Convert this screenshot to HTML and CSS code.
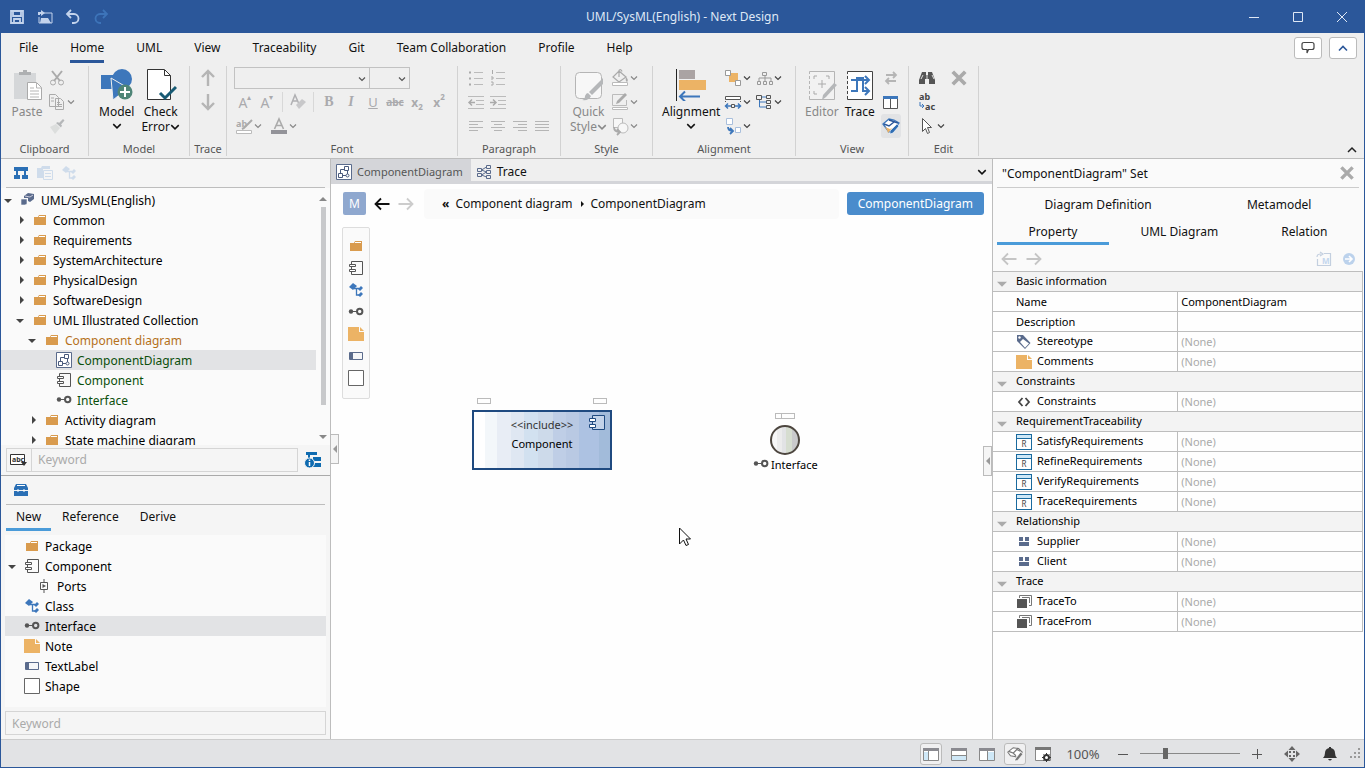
FILE: index.html
```html
<!DOCTYPE html>
<html lang="en">
<head>
    <meta charset="UTF-8">
    <meta name="viewport" content="width=device-width, initial-scale=1.0">
    <title>UML/SysML(English) - Next Design</title>
    <link rel="stylesheet" href="styles.css">
</head>
<body>
    <!-- shared icons -->
    <svg class="defs" width="0" height="0">
        <symbol id="caret" viewBox="0 0 8 8"><path d="M1 2.500l3 3 3-3" fill="none" stroke="currentColor" stroke-width="1.200"/></symbol>
        <symbol id="open" viewBox="0 0 8 8"><path d="M0 3h8L4 7z" fill="currentColor"/></symbol>
        <symbol id="closed" viewBox="0 0 8 8"><path d="M4 0l4 4-4 4z" fill="currentColor"/></symbol>
        <symbol id="folder" viewBox="0 0 16 16"><path d="M2 5h4l1-2h7v10H2z" fill="#d99b4e"/><path d="M7 4.500h6" stroke="#fff"/></symbol>
        <symbol id="note" viewBox="0 0 16 16"><path d="M0 1h11v5h5v9H0z" fill="#ecb365"/><path d="M12 1l4 4h-4z" fill="#ecb365"/></symbol>
        <symbol id="component" viewBox="0 0 16 16"><path d="M3.500 4V1.500h11v13h-11V12M3.500 7v2" fill="none" stroke="#555"/><path d="M1.500 4.500h6v2h-6zM1.500 9.500h6v2h-6z" fill="#fff" stroke="#555"/></symbol>
        <symbol id="diagram" viewBox="0 0 16 16"><path d="M.5.5h15v15H.5z" fill="#fff" stroke="#5a6b8c"/><path d="M8.500 2.500h4v4h-4zM2.500 9.500h4v4h-4zM4.500 9.500v-4h4M11.500 7v3M6.500 11.500H10" fill="none" stroke="#4a5a7c"/><circle cx="11.500" cy="11.500" r="1.500" fill="none" stroke="#4a5a7c"/></symbol>
        <symbol id="iface" viewBox="0 0 16 16"><circle cx="3" cy="7.500" r="2.200" fill="#555"/><path d="M5 7.500h4" stroke="#555"/><circle cx="11.700" cy="7.500" r="2.700" fill="none" stroke="#555" stroke-width="2"/></symbol>
        <symbol id="class" viewBox="0 0 16 16"><path d="M1 5l4-4 4 3-4 4z" fill="currentColor"/><path d="M6 6.500h5M8.500 7v6H11" fill="none" stroke="currentColor" stroke-width="1.300"/><path d="M10 7l3-3 2 2-3 3zM10 13l3-3 2 2-3 3z" fill="currentColor"/></symbol>
        <symbol id="textlabel" viewBox="0 0 16 16"><path d="M1.500 4.500h13v7h-13z" fill="#f5f6f8" stroke="#5a6b8c"/><path d="M2 5h3v6H2z" fill="#5a6b8c"/></symbol>
        <symbol id="shape" viewBox="0 0 16 16"><path d="M.5.5h15v15H.5z" fill="#fff" stroke="#666"/></symbol>
        <symbol id="port" viewBox="0 0 16 16"><path d="M4.500 4.500h7v7h-7zM8 1v3.500M8 11.500V15" fill="none" stroke="#555"/><path d="M6.500 6l3.500 2-3.500 2z" fill="#555"/></symbol>
        <symbol id="model" viewBox="0 0 16 16"><path d="M4 4l4-3 6 1v5l-4 3-2-1V6H4z" fill="#5a6b8c"/><path d="M5 4l5 1 3-2" fill="none" stroke="#ccd"/><path d="M1 7h6v5l-2 1H1z" fill="#5a6b8c" stroke="#fafafa" stroke-width=".6"/></symbol>
        <symbol id="trace" viewBox="0 0 16 16"><path d="M1.500 4.500h4v3h-4zM1.500 9.500h4v3h-4zM10.500 1.500h4v3h-4zM10.500 6.500h4v3h-4zM10.500 11.500h4v3h-4zM5.500 6l5-3M5.500 6l5 2M5.500 11l5-3M5.500 11l5 2" fill="none" stroke="#5a6b8c"/></symbol>
        <symbol id="back" viewBox="0 0 16 16"><path d="M15.500 8H1.500M7 2.500L1.500 8 7 13.500" fill="none" stroke="currentColor" stroke-width="1.800"/></symbol>
        <symbol id="forward" viewBox="0 0 16 16"><path d="M.5 8h14M9 2.500L14.500 8 9 13.500" fill="none" stroke="currentColor" stroke-width="1.800"/></symbol>
        <symbol id="close" viewBox="0 0 16 16"><path d="M3 3l10 10M13 3L3 13" stroke="#aaa" stroke-width="3"/></symbol>
        <symbol id="relation" viewBox="0 0 16 16"><path d="M3 3h4v4H3zM9 3h4v4H9zM3 8h10v4H3z" fill="#5a6b8c"/></symbol>
        <symbol id="stack" viewBox="0 0 16 16"><path d="M3.500 4V1.500h12v10H13M6 3.500h7.500V9" fill="none" stroke="#777"/><path d="M1 5h10v9H1z" fill="#555"/></symbol>
        <symbol id="tag" viewBox="0 0 16 16"><path d="M1 1h6l7.500 8-5.500 6L1 7z" fill="#5a6b8c"/><path d="M7 5l6 4.500-4 4.200L4 8z" fill="#fff"/><circle cx="3.500" cy="3.500" r="1.200" fill="#fff"/></symbol>
        <symbol id="angle" viewBox="0 0 16 16"><path d="M6.500 4L3 8l3.500 4M9.500 4L13 8l-3.500 4" fill="none" stroke="#444" stroke-width="1.800"/></symbol>
        <symbol id="pen" viewBox="0 0 20 20"><path d="M2 8l6-5 6 1 4 4-5 8-2-3-6-1z" fill="#fff" stroke="currentColor" stroke-width="1.200"/><path d="M3 7l5 2 4-4 4 2M8 9l3 3" fill="none" stroke="currentColor" stroke-width="1.400"/><path d="M10 16l6-8 3 2-6 7-3 1z" fill="currentColor" stroke="#fff" stroke-width=".8"/></symbol>
    </svg>

    <header class="titlebar">
        <div class="quick">
            <button aria-label="Save"><svg width="16" height="16" viewBox="0 0 16 16"><path d="M2 2h12v12H2zM4 2v5h8V2M5 14v-4h6v4" fill="none" stroke="#c3d3ec" stroke-width="1.800"/></svg></button>
            <button aria-label="Open"><svg width="16" height="16" viewBox="0 0 16 16"><path d="M7 4h8v10H2V8" fill="none" stroke="#c3d3ec"/><path d="M4 9h7l3 5H3zM1 6V3h3V1l4 3-4 3V5H3v1z" fill="#c3d3ec"/></svg></button>
            <button aria-label="Undo"><svg width="16" height="16" viewBox="0 0 16 16"><path d="M6 1L2 5l4 4M2 5h7a4.300 4.300 0 0 1 0 9H7" fill="none" stroke="#c3d3ec" stroke-width="1.800"/></svg></button>
            <button aria-label="Redo"><svg width="16" height="16" viewBox="0 0 16 16"><path d="M10 1l4 4-4 4M14 5H7a4.300 4.300 0 0 0 0 9h1" fill="none" stroke="#3d74b9" stroke-width="1.800"/></svg></button>
        </div>
        <div class="apptitle">UML/SysML(English) - Next Design</div>
        <div class="winbtns">
            <button aria-label="Minimize"><svg width="12" height="12"><path d="M1 6.500h10" stroke="#dfe8f5"/></svg></button>
            <button aria-label="Maximize"><svg width="12" height="12"><path d="M1.500 1.500h9v9h-9z" fill="none" stroke="#dfe8f5"/></svg></button>
            <button aria-label="Close"><svg width="12" height="12"><path d="M1 1l10 10M11 1L1 11" stroke="#dfe8f5"/></svg></button>
        </div>
    </header>

    <nav class="menubar">
        <button>File</button>
        <button class="current">Home</button>
        <button>UML</button>
        <button>View</button>
        <button>Traceability</button>
        <button>Git</button>
        <button>Team Collaboration</button>
        <button>Profile</button>
        <button>Help</button>
        <div class="menuright">
            <button class="boxed" aria-label="Feedback"><svg width="16" height="16" viewBox="0 0 16 16"><path d="M4 2.500h8q2 0 2 2v3q0 2-2 2H8.500L7 13V9.500H4q-2 0-2-2v-3q0-2 2-2z" fill="none" stroke="#444" stroke-width="1.200"/></svg></button>
            <button class="boxed" aria-label="Collapse"><svg width="16" height="16" viewBox="0 0 16 16"><path d="M4 10.500l4-4 4 4" fill="none" stroke="#2b579a" stroke-width="1.600"/></svg></button>
        </div>
    </nav>

    <div class="ribbon">
        <section class="group clipboard">
            <div class="tools">
                <button class="big off"><svg width="32" height="32" viewBox="0 0 32 32"><path d="M3 4h22v26H3z" fill="#d5d7d9"/><path d="M8 6V3h4V1h4v2h4v3z" fill="#aeb0b2"/><path d="M16.500 13.500h9l5 5v12h-14z" fill="#fff" stroke="#aaa"/><path d="M25.500 14v5h5M19 19h4M19 22h9M19 25h9M19 28h9" fill="none" stroke="#b5b5b5"/></svg>Paste</button>
                <div class="col">
                    <button class="sm off" aria-label="Cut"><svg width="20" height="20" viewBox="0 0 20 20"><path d="M5 3l8 10M15 3L7 13" stroke="#aaa" stroke-width="2"/><circle cx="6" cy="14.500" r="2.500" fill="none" stroke="#aaa"/><circle cx="14" cy="14.500" r="2.500" fill="none" stroke="#aaa"/></svg></button>
                    <button class="sm off" aria-label="Copy"><svg width="20" height="20" viewBox="0 0 20 20"><path d="M2.500 2.500h6l3 3v9h-9zM8.500 6.500h5l3 3v8h-8z" fill="#efefef" stroke="#aaa"/><path d="M4 6h3M4 9h3M10 10.500h3M10 12.500h5M10 14.500h5" stroke="#aaa"/></svg><svg width="8" height="8"><use href="#caret"/></svg></button>
                    <button class="sm off" aria-label="Format painter"><svg width="20" height="20" viewBox="0 0 20 20"><path d="M3 11l6-3 4 4-5 6z" fill="#dcdedd"/><path d="M9 7l2-1 1 1 4-4 1.500 1.500-3.500 4 1 1-1 2z" fill="#b5b7b9"/></svg></button>
                </div>
            </div>
            <div class="caption">Clipboard</div>
        </section>
        <section class="group modelgroup">
            <div class="tools">
                <button class="big"><svg width="32" height="32" viewBox="0 0 32 32"><circle cx="21" cy="10" r="10" fill="#3d77bb"/><path d="M0 6h15v14H0z" fill="#3d77bb"/><path d="M10 9l17 10-15 12z" fill="#3d77bb" stroke="#efefef"/><circle cx="24" cy="23" r="7.500" fill="#4f8577"/><path d="M24 18v10M19 23h10" stroke="#fff" stroke-width="2"/></svg>Model<svg class="bc" width="10" height="10"><use href="#caret"/></svg></button>
                <button class="big"><svg width="32" height="32" viewBox="0 0 32 32"><path d="M2.500.5h17l6 6v24h-23z" fill="#fff" stroke="#333"/><path d="M19.500 1v5.500h6" fill="none" stroke="#333"/><path d="M15 24l5 5L31 18" fill="none" stroke="#175a74" stroke-width="3"/></svg>Check<span>Error<svg width="10" height="10"><use href="#caret"/></svg></span></button>
            </div>
            <div class="caption">Model</div>
        </section>
        <section class="group tracegroup">
            <div class="tools">
                <div class="col">
                    <button class="sm off" aria-label="Up"><svg width="20" height="20" viewBox="0 0 20 20"><path d="M10 18V4M4 9l6-6 6 6" fill="none" stroke="#b5b5b5" stroke-width="2.400"/></svg></button>
                    <button class="sm off" aria-label="Down"><svg width="20" height="20" viewBox="0 0 20 20"><path d="M10 2v14M4 11l6 6 6-6" fill="none" stroke="#b5b5b5" stroke-width="2.400"/></svg></button>
                </div>
            </div>
            <div class="caption">Trace</div>
        </section>
        <section class="group fontgroup">
            <div class="col tools">
                <div class="line combos">
                    <span class="combo family"><select aria-label="Font family"><option></option></select><svg width="8" height="8"><use href="#caret"/></svg></span>
                    <span class="combo size"><select aria-label="Font size"><option></option></select><svg width="8" height="8"><use href="#caret"/></svg></span>
                </div>
                <div class="line">
                    <button class="ch">A<sup>▴</sup></button>
                    <button class="ch">A<sup>▾</sup></button>
                    <i class="bar"></i>
                    <button class="ch" aria-label="Clear format"><svg width="20" height="20" viewBox="0 0 20 20"><path d="M3 13L7 3l4 9M5 9h5" fill="none" stroke="#b0b0b3" stroke-width="1.500"/><path d="M8 13l6-6 4 3-7 7z" fill="#c8c8ca"/></svg></button>
                    <i class="bar"></i>
                    <button class="ch bold">B</button>
                    <button class="ch ital">I</button>
                    <button class="ch under">U</button>
                    <button class="ch strike">abc</button>
                    <button class="ch script">x<sub>2</sub></button>
                    <button class="ch script">x<sup>2</sup></button>
                </div>
                <div class="line wide">
                    <button class="sm off" aria-label="Highlight"><svg width="20" height="20" viewBox="0 0 20 20"><text x="2" y="11" font-size="9" font-weight="bold" fill="#aaa">ab</text><path d="M18 4l-8 8-2 1" fill="none" stroke="#aaa" stroke-width="2"/><path d="M2.500 14.500h15v3h-15z" fill="#fff" stroke="#bbb"/></svg><svg width="8" height="8"><use href="#caret"/></svg></button>
                    <button class="sm off" aria-label="Font color"><svg width="20" height="20" viewBox="0 0 20 20"><path d="M5.500 13L10 3l4.500 10M7 9.500h6" fill="none" stroke="#aaa" stroke-width="1.600"/><path d="M2 14h16v4H2z" fill="#939399"/></svg><svg width="8" height="8"><use href="#caret"/></svg></button>
                </div>
            </div>
            <div class="caption">Font</div>
        </section>
        <section class="group paragraph">
            <div class="col tools">
                <div class="line">
                    <button class="ch" aria-label="Bullets"><svg width="18" height="18" viewBox="0 0 18 18"><path d="M2 3.500h2M2 9.500h2M2 15.500h2" stroke="#aaa" stroke-width="2"/><path d="M7 3.500h9M7 9.500h9M7 15.500h9" stroke="#bbb"/></svg></button>
                    <button class="ch" aria-label="Numbering"><svg width="18" height="18" viewBox="0 0 18 18"><path d="M3.500 1v4M2 8h2v2H2M2 13h2v3H2" fill="none" stroke="#aaa"/><path d="M7 3.500h9M7 9.500h9M7 15.500h9" stroke="#bbb"/></svg></button>
                </div>
                <div class="line">
                    <button class="ch" aria-label="Outdent"><svg width="18" height="18" viewBox="0 0 18 18"><path d="M1 3.500h16M9 7.500h8M9 11.500h8M1 15.500h16" stroke="#bbb"/><path d="M8 9.500H2M5 6.500l-3 3 3 3" fill="none" stroke="#aaa" stroke-width="1.500"/></svg></button>
                    <button class="ch" aria-label="Indent"><svg width="18" height="18" viewBox="0 0 18 18"><path d="M1 3.500h16M9 7.500h8M9 11.500h8M1 15.500h16" stroke="#bbb"/><path d="M1 9.500h6M4 6.500l3 3-3 3" fill="none" stroke="#aaa" stroke-width="1.500"/></svg></button>
                </div>
                <div class="line">
                    <button class="ch" aria-label="Left"><svg width="18" height="18" viewBox="0 0 18 18"><path d="M2 4.500h14M2 7.500h9M2 10.500h14M2 13.500h9" stroke="#b5b5b5"/></svg></button>
                    <button class="ch" aria-label="Center"><svg width="18" height="18" viewBox="0 0 18 18"><path d="M2 4.500h14M5 7.500h8M2 10.500h14M5 13.500h8" stroke="#b5b5b5"/></svg></button>
                    <button class="ch" aria-label="Right"><svg width="18" height="18" viewBox="0 0 18 18"><path d="M2 4.500h14M7 7.500h9M2 10.500h14M7 13.500h9" stroke="#b5b5b5"/></svg></button>
                    <button class="ch" aria-label="Justify"><svg width="18" height="18" viewBox="0 0 18 18"><path d="M2 4.500h14M2 7.500h14M2 10.500h14M2 13.500h14" stroke="#b5b5b5"/></svg></button>
                </div>
            </div>
            <div class="caption">Paragraph</div>
        </section>
        <section class="group stylegroup">
            <div class="tools">
                <button class="big off"><svg width="32" height="32" viewBox="0 0 32 32"><rect x="3.500" y="3.500" width="26" height="26" rx="4" fill="#f7f7f7" stroke="#b5b5b5"/><path d="M31 9v6L20 26l-3-3z" fill="#b5b7b9"/><path d="M16 24l3 3q-2 5-9 4 3-1 3-4 1-3 3-3z" fill="#b5b7b9"/></svg>Quick<span>Style<svg width="10" height="10"><use href="#caret"/></svg></span></button>
                <div class="col">
                    <button class="sm off" aria-label="Fill"><svg width="20" height="20" viewBox="0 0 20 20"><path d="M9 3l7 6-7 5-6-5zM9 9V2.500q2-2 3 1" fill="none" stroke="#aaa" stroke-width="1.200"/><path d="M16 9q3 3 1 5-2-1-1-5z" fill="#aaa"/><path d="M2.500 14.500h15v3h-15z" fill="#fff" stroke="#bbb"/></svg><svg width="8" height="8"><use href="#caret"/></svg></button>
                    <button class="sm off" aria-label="Line"><svg width="20" height="20" viewBox="0 0 20 20"><path d="M15 2.500H2.500v11h14V8" fill="none" stroke="#bbb"/><path d="M17 3l-8 8-3 1 1-3 8-8z" fill="#aaa"/><path d="M2.500 15.500h15v2h-15z" fill="#fff" stroke="#bbb"/></svg><svg width="8" height="8"><use href="#caret"/></svg></button>
                    <button class="sm off" aria-label="Copy style"><svg width="20" height="20" viewBox="0 0 20 20"><path d="M3.500 2.500h9v9h-9z" fill="#f7f7f7" stroke="#bbb"/><circle cx="13" cy="12" r="5" fill="#f7f7f7" stroke="#bbb"/><path d="M4 11q0 5 6 5M7 13l3 3-3 3" fill="none" stroke="#aaa" stroke-width="1.800"/></svg><svg width="8" height="8"><use href="#caret"/></svg></button>
                </div>
            </div>
            <div class="caption">Style</div>
        </section>
        <section class="group aligngroup">
            <div class="tools">
                <button class="big"><svg width="32" height="32" viewBox="0 0 32 32"><path d="M1.500 0v32" stroke="#222"/><path d="M4 1h16v9H4z" fill="#aaa3a3"/><path d="M4 11h27v10H4z" fill="#ecb365"/><path d="M25 27.500H5M10 22.500l-5 5 5 5" fill="none" stroke="#3d77bb" stroke-width="2"/></svg>Alignment<svg class="bc" width="10" height="10"><use href="#caret"/></svg></button>
                <div class="col">
                    <button class="sm" aria-label="Order"><svg width="20" height="20" viewBox="0 0 20 20"><path d="M6 5h9v9H6z" fill="#ecb365"/><path d="M2.500 2.500h5v5h-5zM12.500 12.500h5v5h-5z" fill="#fff" stroke="#999"/></svg><svg width="8" height="8"><use href="#caret"/></svg></button>
                    <button class="sm" aria-label="Distribute"><svg width="20" height="20" viewBox="0 0 20 20"><path d="M2.500 4.500h15v3h-15z" fill="#fff" stroke="#555"/><path d="M2.500 9v1M17.500 9v1M8.500 12.500h3v3h-3z" fill="none" stroke="#555"/><path d="M8 14H3M5 11.500L2.500 14 5 16.500M12 14h5M15 11.500l2.500 2.500-2.500 2.500" fill="none" stroke="#3d77bb" stroke-width="1.500"/></svg><svg width="8" height="8"><use href="#caret"/></svg></button>
                    <button class="sm" aria-label="Replace"><svg width="20" height="20" viewBox="0 0 20 20"><path d="M3.500 2.500h6v6h-6zM12.500 11.500h5v5h-5z" fill="#fff" stroke="#a9bfdc"/><path d="M5 11q0 4 5 4M7 12l3 3-3 3" fill="none" stroke="#3d77bb" stroke-width="1.800"/></svg><svg width="8" height="8"><use href="#caret"/></svg></button>
                </div>
                <div class="col">
                    <button class="sm" aria-label="Layout"><svg width="20" height="20" viewBox="0 0 20 20"><path d="M8.500 4.500h4v3h-4zM3.500 13.500h3v3h-3zM9.500 13.500h3v3h-3zM15.500 13.500h3v3h-3zM11 8v5M5 13v-3h12v3" fill="none" stroke="#999"/></svg><svg width="8" height="8"><use href="#caret"/></svg></button>
                    <button class="sm" aria-label="Tree layout"><svg width="20" height="20" viewBox="0 0 20 20"><path d="M2.500 3.500h5v4h-5zM12.500 3.500h4v3h-4zM12.500 8.500h4v3h-4zM12.500 13.500h4v3h-4z" fill="none" stroke="#555"/><path d="M5.500 8v7h7M5.500 10h7M8 5h4" fill="none" stroke="#3d77bb"/></svg><svg width="8" height="8"><use href="#caret"/></svg></button>
                </div>
            </div>
            <div class="caption">Alignment</div>
        </section>
        <section class="group viewgroup">
            <div class="tools">
                <button class="big off"><svg width="32" height="32" viewBox="0 0 32 32"><path d="M3.500 2.500h25v28h-25z" fill="#f2f2f2" stroke="#b5b5b5"/><path d="M3.500 5v24" stroke="#efefef" stroke-width="2" stroke-dasharray="2 3"/><path d="M8 10V7h3M20 7h3v3M8 22v3h3M16 11v8M12 15h8" fill="none" stroke="#aaa"/><path d="M31 16l-11 12-4 3 1-5 11-12z" fill="#b5b7b9"/></svg>Editor</button>
                <button class="big"><svg width="32" height="32" viewBox="0 0 32 32"><path d="M3.500 2.500h25v28h-25z" fill="#fff" stroke="#444" /><path d="M3.500 5v24" stroke="#efefef" stroke-width="2" stroke-dasharray="2 3"/><path d="M7 11h18M7 22h6V9h6v13h6M21 7l4 4-4 4M21 18l4 4-4 4" fill="none" stroke="#3d77bb" stroke-width="2"/></svg>Trace</button>
                <div class="col">
                    <button class="sm off" aria-label="Swap"><svg width="20" height="20" viewBox="0 0 20 20"><path d="M5 7h10M12 4l3 3-3 3M15 13H5M8 10l-3 3 3 3" fill="none" stroke="#b5b5b5" stroke-width="1.800"/></svg></button>
                    <button class="sm" aria-label="Split view"><svg width="20" height="20" viewBox="0 0 20 20"><path d="M2.500 4.500h14v12h-14zM9.500 5v11" fill="#fff" stroke="#555"/><path d="M2 4h15v3H2z" fill="#3d77bb"/></svg></button>
                    <button class="sm on" aria-label="Edit mode"><svg width="20" height="20" viewBox="0 0 20 20"><path d="M2 8l6-5 5 1 5 3-3 4-7 5z" fill="#fff" stroke="#3d77bb" stroke-width="1.300"/><path d="M4 11l5 2 2-1-4 5-1-3z" fill="#ecb365"/><path d="M3 8l5 2 5-4M8 4l6 2 3 1" fill="none" stroke="#2b579a" stroke-width="1.500"/><path d="M9 15l7-7 2 2-6 7-3 1z" fill="#2f6db3" stroke="#fff" stroke-width=".6"/></svg></button>
                </div>
            </div>
            <div class="caption">View</div>
        </section>
        <section class="group editgroup">
            <div class="tools">
                <div class="col">
                    <button class="sm" aria-label="Find"><svg width="20" height="20" viewBox="0 0 20 20"><path d="M5 4h4v3h2V4h4l3 8v4h-6v-5H8v5H2v-4z" fill="#555"/><path d="M4 11l2-4M15 7l2 4M10 7v4" stroke="#ddd"/></svg></button>
                    <button class="sm abac" aria-label="Replace text"><span>ab</span><span><svg width="6" height="8"><path d="M1 0v4h4M3 2l2 2-2 2" fill="none" stroke="#3d77bb"/></svg>ac</span></button>
                    <button class="sm" aria-label="Select"><svg width="20" height="20" viewBox="0 0 20 20"><path d="M5.500 2.500v13l3-3 2 5 2-1-2-5h4z" fill="#fff" stroke="#555"/></svg><svg width="8" height="8"><use href="#caret"/></svg></button>
                </div>
                <div class="col">
                    <button class="sm" aria-label="Delete"><svg width="20" height="20"><use href="#close"/></svg></button>
                </div>
            </div>
            <div class="caption">Edit</div>
        </section>
        <button class="fold" aria-label="Collapse ribbon"><svg width="12" height="12"><path d="M2 8l4-4 4 4" fill="none" stroke="#222" stroke-width="1.500"/></svg></button>
    </div>

    <main class="work">
        <aside class="left">
            <div class="panelbar">
                <button aria-label="Model tree"><svg width="16" height="16" viewBox="0 0 16 16"><path d="M1 2h14v4H1zM1 10h6v4H1zM9 10h6v4H9zM3 6h2v4H3zM11 6h2v4h-2z" fill="#2a6fb5"/></svg></button>
                <button aria-label="Pages"><svg width="16" height="16" viewBox="0 0 16 16"><path d="M0 3h4l1-2h8v3H6v9H0z" fill="#cfdceb"/><path d="M6.500 5.500h9v9h-9zM8 8.500h6M8 11.500h6" fill="none" stroke="#cfdceb"/></svg></button>
                <button class="pale" aria-label="Classes"><svg width="16" height="16"><use href="#class"/></svg></button>
            </div>
            <div class="treebox">
                <ul class="tree">
                    <li><svg class="tw" width="8" height="8"><use href="#open"/></svg><svg class="ic" width="16" height="16"><use href="#model"/></svg>UML/SysML(English)</li>
                    <li class="l1"><svg class="tw" width="8" height="8"><use href="#closed"/></svg><svg class="ic" width="16" height="16"><use href="#folder"/></svg>Common</li>
                    <li class="l1"><svg class="tw" width="8" height="8"><use href="#closed"/></svg><svg class="ic" width="16" height="16"><use href="#folder"/></svg>Requirements</li>
                    <li class="l1"><svg class="tw" width="8" height="8"><use href="#closed"/></svg><svg class="ic" width="16" height="16"><use href="#folder"/></svg>SystemArchitecture</li>
                    <li class="l1"><svg class="tw" width="8" height="8"><use href="#closed"/></svg><svg class="ic" width="16" height="16"><use href="#folder"/></svg>PhysicalDesign</li>
                    <li class="l1"><svg class="tw" width="8" height="8"><use href="#closed"/></svg><svg class="ic" width="16" height="16"><use href="#folder"/></svg>SoftwareDesign</li>
                    <li class="l1"><svg class="tw" width="8" height="8"><use href="#open"/></svg><svg class="ic" width="16" height="16"><use href="#folder"/></svg>UML Illustrated Collection</li>
                    <li class="l2 brown"><svg class="tw" width="8" height="8"><use href="#open"/></svg><svg class="ic" width="16" height="16"><use href="#folder"/></svg>Component diagram</li>
                    <li class="l3 green selected"><span class="tw"></span><svg class="ic" width="16" height="16"><use href="#diagram"/></svg>ComponentDiagram</li>
                    <li class="l3 green"><span class="tw"></span><svg class="ic" width="16" height="16"><use href="#component"/></svg>Component</li>
                    <li class="l3 green"><span class="tw"></span><svg class="ic" width="16" height="16"><use href="#iface"/></svg>Interface</li>
                    <li class="l2"><svg class="tw" width="8" height="8"><use href="#closed"/></svg><svg class="ic" width="16" height="16"><use href="#folder"/></svg>Activity diagram</li>
                    <li class="l2"><svg class="tw" width="8" height="8"><use href="#closed"/></svg><svg class="ic" width="16" height="16"><use href="#folder"/></svg>State machine diagram</li>
                </ul>
                <div class="scroll">
                    <svg width="8" height="8"><path d="M0 6h8L4 2z" fill="#888"/></svg>
                    <div class="thumb"></div>
                    <svg width="8" height="8"><use href="#open"/></svg>
                </div>
            </div>
            <div class="search">
                <div class="field">
                    <button aria-label="Match mode"><svg width="18" height="16" viewBox="0 0 18 16"><path d="M.5 2.500h14v10H.5z" fill="#fff" stroke="#333"/><text x="2" y="10" font-size="7" font-weight="bold" fill="#333">abc</text><path d="M11 10h6l-3 4z" fill="#333"/></svg></button>
                    <input type="text" placeholder="Keyword" aria-label="Search model">
                </div>
                <button aria-label="Filter"><svg width="18" height="18" viewBox="0 0 18 18"><path d="M2 1h11v3H2zM9 6h8v4H9zM9 12h8v4H9zM4 4h2v4H4z" fill="#0f6bb0"/><circle cx="5.500" cy="12" r="5" fill="#0f6bb0" stroke="#f5f5f5"/><path d="M5.500 8.500v1.500M5.500 11v4" stroke="#fff" stroke-width="1.500"/></svg></button>
            </div>
            <div class="panelbar toolbox">
                <button aria-label="Toolbox"><svg width="16" height="16" viewBox="0 0 16 16"><path d="M1 6l2-4h10l2 4v2H1zM1 9h14v5H1z" fill="#2a6fb5"/><path d="M4 3.500h8M5 7v3M11 7v3" stroke="#fff"/></svg></button>
            </div>
            <div class="tabs">
                <button class="current">New</button>
                <button>Reference</button>
                <button>Derive</button>
            </div>
            <ul class="tree palette">
                <li><span class="tw"></span><svg class="ic" width="16" height="16"><use href="#folder"/></svg>Package</li>
                <li><svg class="tw" width="8" height="8"><use href="#open"/></svg><svg class="ic" width="16" height="16"><use href="#component"/></svg>Component</li>
                <li class="l1"><span class="tw"></span><svg class="ic" width="16" height="16"><use href="#port"/></svg>Ports</li>
                <li><span class="tw"></span><svg class="ic blue" width="16" height="16"><use href="#class"/></svg>Class</li>
                <li class="selected"><span class="tw"></span><svg class="ic" width="16" height="16"><use href="#iface"/></svg>Interface</li>
                <li><span class="tw"></span><svg class="ic" width="16" height="16"><use href="#note"/></svg>Note</li>
                <li><span class="tw"></span><svg class="ic" width="16" height="16"><use href="#textlabel"/></svg>TextLabel</li>
                <li><span class="tw"></span><svg class="ic" width="16" height="16"><use href="#shape"/></svg>Shape</li>
            </ul>
            <input class="keyword" type="text" placeholder="Keyword" aria-label="Search toolbox">
        </aside>

        <section class="center">
            <div class="doctabs">
                <button class="current"><svg width="16" height="16"><use href="#diagram"/></svg>ComponentDiagram</button>
                <button><svg width="16" height="16"><use href="#trace"/></svg>Trace</button>
                <button class="more" aria-label="More tabs"><svg width="10" height="10"><use href="#caret"/></svg></button>
            </div>
            <div class="nav">
                <button class="m">M</button>
                <button aria-label="Back"><svg width="16" height="16"><use href="#back"/></svg></button>
                <button class="dim" aria-label="Forward"><svg width="16" height="16"><use href="#forward"/></svg></button>
                <div class="crumbs"><b>«</b><a href="#">Component diagram</a><svg width="6" height="6"><use href="#closed"/></svg><a href="#">ComponentDiagram</a></div>
                <button class="viewname">ComponentDiagram</button>
            </div>
            <div class="canvas">
                <div class="shapes">
                    <button aria-label="Package"><svg width="16" height="16"><use href="#folder"/></svg></button>
                    <button aria-label="Component"><svg width="16" height="16"><use href="#component"/></svg></button>
                    <button class="blue" aria-label="Class"><svg width="16" height="16"><use href="#class"/></svg></button>
                    <button aria-label="Interface"><svg width="16" height="16"><use href="#iface"/></svg></button>
                    <button aria-label="Note"><svg width="16" height="16"><use href="#note"/></svg></button>
                    <button aria-label="TextLabel"><svg width="16" height="16"><use href="#textlabel"/></svg></button>
                    <button aria-label="Shape"><svg width="16" height="16"><use href="#shape"/></svg></button>
                </div>
                <div class="grip g1"></div>
                <div class="grip g2"></div>
                <div class="node">
                    <span>&lt;&lt;include&gt;&gt;</span>
                    <span class="name">Component</span>
                    <svg width="18" height="18" viewBox="0 0 18 18"><path d="M4.500 1.500h12v14h-12z" fill="#c3d3e9" stroke="#1f4a80"/><path d="M1.500 4.500h6v3h-6zM1.500 10.500h6v3h-6z" fill="#fff" stroke="#1f4a80"/></svg>
                </div>
                <div class="grip g3"></div>
                <div class="ball"></div>
                <div class="balllabel"><svg width="16" height="16"><use href="#iface"/></svg>Interface</div>
                <svg class="cursor" width="14" height="20" viewBox="0 0 14 20"><path d="M1.500 1v16l4-4 2.500 5.500 2.500-1-2.500-5.500h4.500z" fill="#fff" stroke="#111"/></svg>
            </div>
            <button class="handle hl" aria-label="Collapse left"><svg width="5" height="8"><path d="M5 0v8L1 4z" fill="#999"/></svg></button>
            <button class="handle hr" aria-label="Collapse right"><svg width="5" height="8"><path d="M5 0v8L1 4z" fill="#999"/></svg></button>
        </section>

        <aside class="right">
            <div class="inspector">
                <div class="head"><span>"ComponentDiagram" Set</span><button aria-label="Close"><svg width="18" height="18"><use href="#close"/></svg></button></div>
                <div class="ptabs"><button>Diagram Definition</button><button>Metamodel</button></div>
                <div class="ptabs"><button class="current">Property</button><button>UML Diagram</button><button>Relation</button></div>
                <div class="pnav">
                    <button aria-label="Back"><svg width="16" height="16"><use href="#back"/></svg></button>
                    <button aria-label="Forward"><svg width="16" height="16"><use href="#forward"/></svg></button>
                    <span class="grow"></span>
                    <button aria-label="Metamodel"><svg width="16" height="16" viewBox="0 0 16 16"><path d="M8 2.500h6.500v12h-13V8M1 6q0-3 4-3M4 1l3 2-3 2" fill="none" stroke="#c3cfdf" stroke-width="1.200"/><text x="6" y="13" font-size="8" font-weight="bold" fill="#c3d6ee">M</text></svg></button>
                    <button aria-label="Go"><svg width="16" height="16" viewBox="0 0 16 16"><circle cx="8" cy="8" r="6" fill="#bcd2ec"/><path d="M4 8h7M8 5l3 3-3 3" fill="none" stroke="#fff" stroke-width="1.600"/></svg></button>
                </div>
            </div>
            <table class="props">
                <tr><th colspan="2"><svg width="10" height="10"><use href="#open"/></svg>Basic information</th></tr>
                <tr><td>Name</td><td class="val">ComponentDiagram</td></tr>
                <tr><td>Description</td><td></td></tr>
                <tr><td><svg width="16" height="16"><use href="#tag"/></svg>Stereotype</td><td>(None)</td></tr>
                <tr><td><svg width="16" height="16"><use href="#note"/></svg>Comments</td><td>(None)</td></tr>
                <tr><th colspan="2"><svg width="10" height="10"><use href="#open"/></svg>Constraints</th></tr>
                <tr><td><svg width="16" height="16"><use href="#angle"/></svg>Constraints</td><td>(None)</td></tr>
                <tr><th colspan="2"><svg width="10" height="10"><use href="#open"/></svg>RequirementTraceability</th></tr>
                <tr><td><i class="req">R</i>SatisfyRequirements</td><td>(None)</td></tr>
                <tr><td><i class="req">R</i>RefineRequirements</td><td>(None)</td></tr>
                <tr><td><i class="req">R</i>VerifyRequirements</td><td>(None)</td></tr>
                <tr><td><i class="req">R</i>TraceRequirements</td><td>(None)</td></tr>
                <tr><th colspan="2"><svg width="10" height="10"><use href="#open"/></svg>Relationship</th></tr>
                <tr><td><svg width="16" height="16"><use href="#relation"/></svg>Supplier</td><td>(None)</td></tr>
                <tr><td><svg width="16" height="16"><use href="#relation"/></svg>Client</td><td>(None)</td></tr>
                <tr><th colspan="2"><svg width="10" height="10"><use href="#open"/></svg>Trace</th></tr>
                <tr><td><svg width="16" height="16"><use href="#stack"/></svg>TraceTo</td><td>(None)</td></tr>
                <tr><td><svg width="16" height="16"><use href="#stack"/></svg>TraceFrom</td><td>(None)</td></tr>
            </table>
        </aside>
    </main>

    <footer class="status">
        <button class="on" aria-label="Left pane"><svg width="16" height="16" viewBox="0 0 16 16"><path d="M.5 2.500h15v12H.5z" fill="#fff" stroke="#888"/><path d="M0 2h16v3H0z" fill="#8a8a90"/><path d="M1 6h4v8H1z" fill="#cfe8f7"/><path d="M5.500 5v9" stroke="#888"/></svg></button>
        <button aria-label="Bottom pane"><svg width="16" height="16" viewBox="0 0 16 16"><path d="M.5 2.500h15v12H.5z" fill="#fff" stroke="#888"/><path d="M0 2h16v3H0z" fill="#8a8a90"/><path d="M1 10h14v4H1z" fill="#cfe8f7"/><path d="M1 9.500h14" stroke="#888"/></svg></button>
        <button aria-label="Right pane"><svg width="16" height="16" viewBox="0 0 16 16"><path d="M.5 2.500h15v12H.5z" fill="#fff" stroke="#888"/><path d="M0 2h16v3H0z" fill="#8a8a90"/><path d="M9 6h6v8H9z" fill="#cfe8f7"/><path d="M8.500 5v9" stroke="#888"/></svg></button>
        <button class="on pen" aria-label="Edit mode"><svg width="18" height="18"><use href="#pen"/></svg></button>
        <button aria-label="Window settings"><svg width="16" height="16" viewBox="0 0 16 16"><path d="M.5 2.500h15v12H.5z" fill="#fff" stroke="#888"/><path d="M0 1h16v3H0z" fill="#777"/><circle cx="11.500" cy="11.500" r="2.500" fill="none" stroke="#333" stroke-width="2"/><path d="M11.500 7v9M7 11.500h9M8.500 8.500l6 6M14.500 8.500l-6 6" stroke="#333"/><circle cx="11.500" cy="11.500" r="1.500" fill="#fff"/></svg></button>
        <span class="zoom">100%</span>
        <button aria-label="Zoom out"><svg width="12" height="12"><path d="M1 6.500h10" stroke="#555"/></svg></button>
        <input type="range" min="0" max="100" value="24" aria-label="Zoom">
        <button aria-label="Zoom in"><svg width="12" height="12"><path d="M1 6.500h10M6.500 1v10" stroke="#555"/></svg></button>
        <button class="fit" aria-label="Fit"><svg width="16" height="16" viewBox="0 0 16 16"><path d="M8 0l3.500 4h-7zM8 16l3.500-4h-7zM0 8l4-3.500v7zM16 8l-4-3.500v7zM5 5h2v2H5zM9 5h2v2H9zM5 9h2v2H5zM9 9h2v2H9z" fill="#666"/></svg></button>
        <button class="bell" aria-label="Notifications"><svg width="16" height="16" viewBox="0 0 16 16"><path d="M7 1h2v1q4 1 4 5 0 3 2 5H1q2-2 2-5 0-4 4-5zM6 13h4q-2 3-4 0z" fill="#333"/></svg></button>
        <svg class="resize" width="12" height="12"><path d="M9 1h2M9 5h2M5 5h2M9 9h2M5 9h2M1 9h2" stroke="#999" stroke-width="2"/></svg>
    </footer>
</body>
</html>
```
FILE: styles.css
```css
*{
    box-sizing: border-box;
}
body{
    margin: 0;
    height: 100vh;
    display: flex;
    flex-direction: column;
    overflow: hidden;
    border: 1px solid #2b579a;
    border-top: 0;
    background: #efefef;
    color: #111;
    font-family: "Noto Sans", "Open Sans", sans-serif;
    font-size: 12px;
}
button,input,select{
    margin: 0;
    padding: 0;
    border: 0;
    background: none;
    color: inherit;
    font: inherit;
}
button{
    display: flex;
    align-items: center;
    justify-content: center;
    white-space: nowrap;
}
svg{
    display: block;
    flex: none;
}
ul{
    margin: 0;
    padding: 0;
    list-style: none;
}
.defs{
    position: absolute;
}

/* title bar */
.titlebar{
    display: grid;
    grid-template-columns: 1fr auto 1fr;
    align-items: center;
    height: 33px;
    flex: none;
    background: #2b579a;
    color: #dfe8f5;
}
.quick{
    display: flex;
    gap: 12px;
    padding-left: 8px;
}
.winbtns{
    display: flex;
    justify-content: flex-end;
}
.winbtns button{
    width: 44px;
    height: 33px;
}

/* menu */
.menubar{
    display: flex;
    height: 30px;
    flex: none;
    padding: 0 7px 0 2px;
}
.menubar > button{
    position: relative;
    padding: 0 16px 2px;
}
.menubar .current::after{
    content: "";
    position: absolute;
    left: 16px;
    right: 16px;
    bottom: 0;
    height: 3px;
    background: #2b579a;
}
.menuright{
    display: flex;
    gap: 7px;
    margin-left: auto;
    padding-top: 4px;
}
.boxed{
    width: 28px;
    height: 22px;
    border: 1px solid #bbb;
    border-radius: 3px;
    background: #fff;
}

/* ribbon */
.ribbon{
    display: flex;
    height: 96px;
    flex: none;
    padding: 3px 6px 2px 0;
    border-bottom: 1px solid #bdbdbd;
}
.group{
    display: flex;
    flex-direction: column;
    flex: none;
    border-right: 1px solid #d2d2d2;
}
.tools{
    display: flex;
    flex: 1;
}
.caption{
    height: 14px;
    line-height: 14px;
    font-size: 11px;
    text-align: center;
    color: #555;
}
.col{
    display: flex;
    flex-direction: column;
}
.line{
    display: flex;
    align-items: center;
    height: 24px;
}
.big{
    flex-direction: column;
    justify-content: flex-start;
    padding-top: 3px;
    line-height: 15px;
}
.big > svg:first-child{
    margin-bottom: 3px;
}
.big span{
    display: flex;
    align-items: center;
}
.bc{
    margin-top: 2px;
}
.sm{
    height: 24px;
    justify-content: flex-start;
    color: #444;
}
.off{
    color: #888;
}
.on{
    border-radius: 3px;
    background: #e2e3e5;
}
.ch{
    width: 22px;
    height: 24px;
    color: #aaaaad;
    font-size: 14px;
}
.ch sub,.ch sup{
    font-size: 8px;
    line-height: 8px;
}
.ch sup{
    align-self: flex-start;
    margin-top: 3px;
}
.ch sub{
    align-self: flex-end;
    margin-bottom: 3px;
}
.bold{
    font-family: "Liberation Serif", serif;
    font-weight: bold;
}
.ital{
    font-family: "Liberation Serif", serif;
    font-style: italic;
    font-weight: bold;
}
.under{
    font-size: 13px;
    text-decoration: underline;
}
.script{
    font-size: 12px;
    font-weight: bold;
}
.strike{
    font-size: 10px;
    font-weight: bold;
    text-decoration: line-through;
}
.bar{
    width: 1px;
    height: 20px;
    margin: 0 4px;
    background: #d8d8d8;
}
.abac{
    flex-direction: column;
    justify-content: center;
    align-items: flex-start;
    width: 20px;
    padding-left: 2px;
    font-size: 9px;
    font-weight: bold;
    line-height: 10px;
}
.abac span{
    display: flex;
}
.clipboard{
    width: 88px;
}
.clipboard .tools{
    padding-left: 10px;
    gap: 4px;
}
.modelgroup{
    width: 101px;
}
.modelgroup .tools{
    gap: 7px;
    padding-left: 10px;
}
.tracegroup{
    width: 37px;
}
.tracegroup .tools{
    justify-content: center;
}
.fontgroup{
    width: 231px;
}
.fontgroup .tools{
    padding-left: 7px;
}
.wide{
    gap: 7px;
}
.combos{
    align-items: flex-start;
    padding-top: 1px;
}
.combo{
    position: relative;
    width: 136px;
    height: 22px;
    border: 1px solid #c2c2c2;
}
.combo.size{
    width: 40px;
    border-left: 0;
}
.combo select{
    width: 100%;
    height: 20px;
    appearance: none;
}
.combo svg{
    position: absolute;
    right: 3px;
    top: 7px;
    color: #555;
    pointer-events: none;
}
.paragraph{
    width: 103px;
}
.paragraph .tools{
    padding-left: 7px;
}
.stylegroup{
    width: 92px;
}
.stylegroup .tools{
    padding-left: 9px;
    gap: 3px;
}
.aligngroup{
    width: 143px;
}
.aligngroup .tools{
    padding-left: 9px;
    gap: 3px;
}
.viewgroup{
    width: 113px;
}
.viewgroup .tools{
    padding-left: 9px;
    gap: 5px;
}
.editgroup{
    width: 70px;
}
.editgroup .tools{
    padding-left: 8px;
    gap: 4px;
}
.fold{
    margin-left: auto;
    align-self: flex-end;
}

/* work area */
.work{
    display: flex;
    flex: 1;
    min-height: 0;
}
.left{
    display: flex;
    flex-direction: column;
    width: 330px;
    flex: none;
    border-right: 1px solid #bdbdbd;
    background: #f5f5f5;
}
.panelbar{
    display: flex;
    gap: 8px;
    height: 29px;
    flex: none;
    margin: 0 5px;
    padding-left: 7px;
    border-bottom: 1px solid #bdbdbd;
}
.pale{
    color: #cfdceb;
}
.treebox{
    display: flex;
    flex: 1 1 0;
    min-height: 0;
    padding-top: 2px;
    overflow: hidden;
    background: #fafafa;
}
.tree{
    flex: 1;
    color: #000;
}
.tree li{
    display: flex;
    align-items: center;
    height: 20px;
    white-space: nowrap;
}
.tree .l1{
    padding-left: 12px;
}
.tree .l2{
    padding-left: 24px;
}
.tree .l3{
    padding-left: 36px;
}
.tw{
    width: 14px;
    margin-right: 5px;
    color: #444;
}
.ic{
    margin-right: 5px;
}
.tree .brown{
    color: #b5711a;
}
.tree .green{
    color: #0b4f0b;
}
.blue{
    color: #3d77bb;
}
.selected{
    background: #e2e3e5;
}
.scroll{
    display: flex;
    flex-direction: column;
    align-items: center;
    width: 14px;
    padding: 5px 0;
    color: #888;
}
.thumb{
    width: 5px;
    height: 198px;
    margin: 4px 0 auto;
    background: #c8c9cb;
}
.search{
    display: flex;
    align-items: center;
    gap: 6px;
    height: 31px;
    flex: none;
    padding: 0 8px 1px 5px;
    border-bottom: 1px solid #aaa;
}
.field{
    display: flex;
    flex: 1;
    height: 24px;
    border: 1px solid #d5d5d5;
}
.field button{
    width: 25px;
    border-right: 1px solid #d5d5d5;
}
.field input{
    flex: 1;
    min-width: 0;
    padding-left: 6px;
}
::placeholder{
    color: #aaa;
}
.tabs{
    display: flex;
    gap: 1px;
    height: 26px;
    flex: none;
    margin: 0 5px 4px;
}
.tabs button{
    padding: 0 10px;
    border-bottom: 3px solid transparent;
}
.tabs .current,.ptabs .current{
    border-bottom-color: #4a9bd9;
}
.palette{
    flex: none;
    height: 172px;
    margin: 0 4px;
    padding-top: 1px;
    background: #fafafa;
}
.keyword{
    height: 24px;
    flex: none;
    margin: 4px;
    padding-left: 6px;
    border: 1px solid #d5d5d5;
}

/* editor */
.center{
    position: relative;
    display: flex;
    flex-direction: column;
    flex: 1;
    min-width: 0;
    background: #fefefe;
}
.doctabs{
    display: flex;
    height: 25px;
    flex: none;
    border-bottom: 3px solid #d4d5d9;
    background: #efefef;
}
.doctabs button{
    gap: 5px;
    padding: 3px 8px 0 5px;
}
.doctabs .current{
    background: #d4d5d9;
    color: #555;
    font-size: 11px;
}
.doctabs .more{
    margin-left: auto;
    padding-right: 5px;
}
.nav{
    display: flex;
    align-items: center;
    gap: 8px;
    height: 40px;
    flex: none;
    padding: 0 8px 1px 12px;
}
.m{
    width: 23px;
    height: 23px;
    border-radius: 2px;
    background: #8fa8cf;
    color: #fff;
}
.dim{
    color: #ccc;
}
.crumbs{
    display: flex;
    align-items: center;
    flex: 1;
    gap: 6px;
    height: 30px;
    margin-left: 2px;
    padding-left: 18px;
    border-radius: 4px;
    background: #fafafa;
}
.crumbs a{
    color: #111;
    text-decoration: none;
}
.viewname{
    height: 23px;
    padding: 0 11px;
    border-radius: 3px;
    background: #4a8ccc;
    color: #fff;
}
.canvas{
    position: relative;
    flex: 1;
}
.shapes{
    display: flex;
    flex-direction: column;
    gap: 6px;
    width: 28px;
    margin: 3px 0 0 11px;
    padding: 10px 0 12px;
    border: 1px solid #ddd;
    border-radius: 2px;
    background: #fafafa;
}
.grip{
    position: absolute;
    width: 14px;
    height: 6px;
    border: 1px solid #bbb;
}
.g1{
    left: 146px;
    top: 174px;
}
.g2{
    left: 262px;
    top: 174px;
}
.g3{
    left: 444px;
    top: 189px;
    width: 20px;
    background: linear-gradient(90deg, transparent 5px, #bbb 5px, #bbb 6px, transparent 6px);
}
.node{
    position: absolute;
    left: 141px;
    top: 186px;
    display: flex;
    flex-direction: column;
    align-items: center;
    width: 140px;
    height: 60px;
    padding-top: 3px;
    border: 2px solid #1f4a80;
    background: linear-gradient(90deg, #fff 8%, #f3f7fa 8% 17%, #e8edf5 17% 27%, #dfe7f2 27% 37%, #d2e1f0 37% 47%, #cddaea 47% 58%, #bfcee6 58% 68%, #b9c9e3 68% 77%, #adc2e2 77% 92%, #a2bbda 92%);
    font-size: 11px;
    line-height: 19px;
    color: #333;
}
.node .name{
    color: #000;
}
.node svg{
    position: absolute;
    right: 4px;
    top: 2px;
}
.ball{
    position: absolute;
    left: 439px;
    top: 201px;
    width: 30px;
    height: 30px;
    border: 2px solid #4d463f;
    border-radius: 50%;
    background: linear-gradient(90deg, #f7f7f7 20%, #ececec 20% 40%, #e2e3e5 40% 55%, #d6ddd0 55% 78%, #c9c9cb 78%);
}
.balllabel{
    position: absolute;
    left: 422px;
    top: 232px;
    display: flex;
    align-items: center;
    gap: 2px;
    font-size: 11px;
    color: #000;
}
.cursor{
    position: absolute;
    left: 347px;
    top: 303px;
}
.handle{
    position: absolute;
    width: 9px;
    height: 30px;
    border: 1px solid #bbb;
    background: #f5f5f5;
}
.hl{
    left: -1px;
    top: 275px;
}
.hr{
    right: 0;
    top: 287px;
}

/* inspector */
.right{
    width: 372px;
    flex: none;
    border-left: 1px solid #bdbdbd;
    background: #fefefe;
}
.inspector{
    padding: 0 5px 0 4px;
    background: #fafafa;
}
.head{
    display: flex;
    align-items: center;
    justify-content: space-between;
    height: 29px;
    padding: 0 3px 0 5px;
    border-bottom: 1px solid #ccc;
}
.ptabs{
    display: flex;
    height: 29px;
    padding-top: 6px;
}
.ptabs button{
    flex: 1 1 auto;
    border-bottom: 3px solid transparent;
}
.ptabs + .ptabs{
    height: 28px;
    padding-top: 3px;
}
.pnav{
    display: flex;
    align-items: center;
    gap: 9px;
    height: 26px;
    padding: 2px 2px 0 4px;
    color: #c5c5c5;
}
.grow{
    flex: 1;
}
.props{
    width: 370px;
    border-collapse: collapse;
    table-layout: fixed;
    font-size: 11px;
    color: #000;
}
.props th,.props td{
    height: 20px;
    padding: 0 3px;
    border: 1px solid #bdbdbd;
    border-left: 0;
    line-height: 12px;
    font-weight: normal;
    text-align: left;
    white-space: nowrap;
}
.props th{
    padding-left: 4px;
    background: #f3f3f3;
}
.props td:first-child{
    padding-left: 23px;
}
.props td:last-child{
    color: #aaa;
}
.props td.val:last-child{
    color: #000;
}
.props svg,.req{
    display: inline-block;
    margin-right: 5px;
    vertical-align: middle;
}
.props th svg{
    margin-right: 9px;
    color: #aaa;
}
.req{
    width: 16px;
    height: 16px;
    border: 1px solid #1a6a9e;
    background: linear-gradient(#cfe8f7 3px, #1a6a9e 3px 4px, #fff 4px);
    color: #444;
    font-size: 8px;
    font-style: normal;
    line-height: 10px;
    padding-top: 4px;
    text-align: center;
}

/* status bar */
.status{
    display: flex;
    align-items: center;
    justify-content: flex-end;
    gap: 6px;
    height: 28px;
    flex: none;
    padding-right: 3px;
    border-top: 1px solid #ccc;
    background: #e2e3e5;
    font-size: 13px;
    color: #555;
}
.status button{
    width: 22px;
    height: 22px;
}
.status .on{
    border: 1px solid #bbb;
    background: #f0f0f1;
}
.pen{
    color: #777;
}
.zoom{
    width: 46px;
    text-align: center;
}
.status input{
    width: 100px;
    height: 16px;
    appearance: none;
    background: linear-gradient(#888, #888) center / 100% 1px no-repeat;
}
.status input::-webkit-slider-thumb{
    appearance: none;
    width: 5px;
    height: 11px;
    background: #666;
}
.status .fit{
    margin-left: 7px;
}
.status .bell{
    margin-left: 10px;
}
.resize{
    margin-left: 2px;
}
```
